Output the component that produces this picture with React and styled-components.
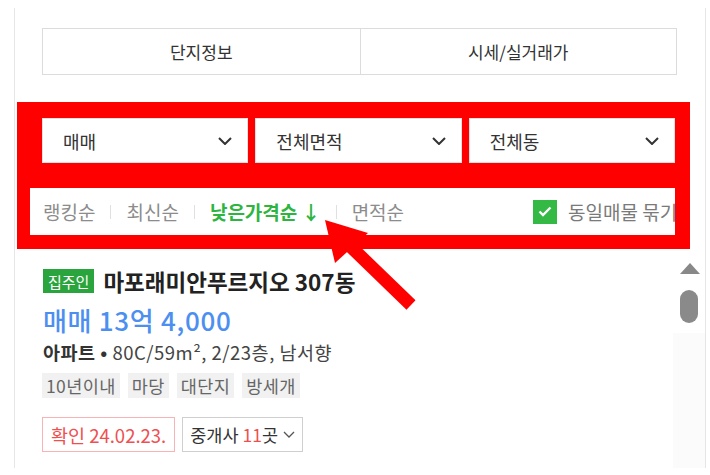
import React from "react";
import styled, { createGlobalStyle } from "styled-components";

const Global = createGlobalStyle`
  html, body { margin: 0; padding: 0; background: #fff; }
  body { font-family: "Noto Sans CJK KR", "Noto Sans", sans-serif; }
  * { box-sizing: border-box; }
`;

const Page = styled.div`
  position: relative;
  width: 710px;
  height: 475px;
  overflow: hidden;
  background: #fff;
  padding-top: 8px;
  padding-left: 14px;
`;

const Panel = styled.div`
  width: 692px;
  height: 460px;
  border-left: 1px solid #e6e6e6;
  border-right: 1px solid #e6e6e6;
  display: flex;
  flex-direction: column;
`;

const Tabs = styled.div`
  margin: 20px 28px 0 27px;
  height: 47px;
  border: 1px solid #dcdcdc;
  display: grid;
  grid-template-columns: 1fr 1fr;
`;

const Tab = styled.div`
  display: flex;
  align-items: center;
  justify-content: center;
  font-size: 17px;
  color: #333;
  & + & { border-left: 1px solid #dcdcdc; }
`;

const Frame = styled.div`
  margin: 27px 15px 0 2px;
  background: #ff0000;
  padding: 16px 15px 14px 13px;
  display: flex;
  flex-direction: column;
  gap: 25px;
`;

const SelectRow = styled.div`
  margin-left: 12px;
  display: grid;
  grid-template-columns: 1fr 1fr 1fr;
  gap: 7px;
`;

const Select = styled.div`
  height: 45px;
  background: #fff;
  border: 1px solid #e2e2e2;
  display: flex;
  align-items: center;
  justify-content: space-between;
  padding: 0 15px 0 20px;
  font-size: 18px;
  color: #333;
`;

const SortRow = styled.div`
  height: 47px;
  background: #fff;
  display: flex;
  align-items: center;
  padding-left: 13px;
  overflow: hidden;
`;

const SortList = styled.div`
  flex: 1;
  display: flex;
  align-items: center;
  gap: 15px;
`;

const SortItem = styled.span`
  font-size: 19px;
  white-space: nowrap;
  color: ${(p) => (p.$active ? "#2db53f" : "#8c8c8c")};
  font-weight: ${(p) => (p.$active ? 700 : 400)};
`;

const Sep = styled.span`
  width: 1px;
  height: 14px;
  background: #e0e0e0;
`;

const CheckGroup = styled.div`
  width: 142px;
  flex: none;
  display: flex;
  align-items: center;
  gap: 11px;
  overflow: hidden;
  white-space: nowrap;
`;

const CheckBox = styled.span`
  width: 24px;
  height: 24px;
  flex: none;
  background: #34b944;
  display: flex;
  align-items: center;
  justify-content: center;
`;

const CheckLabel = styled.span`
  font-size: 19px;
  color: #7a7a7a;
`;

const ListArea = styled.div`
  flex: 1;
  display: flex;
`;

const Item = styled.div`
  flex: 1;
  padding: 20px 0 0 27px;
  display: flex;
  flex-direction: column;
  align-items: flex-start;
`;

const TitleRow = styled.div`
  display: flex;
  align-items: center;
  gap: 9px;
  height: 24px;
`;

const Badge = styled.span`
  height: 24px;
  padding: 0 5px;
  background: #2aa43c;
  color: #fff;
  font-size: 15px;
  display: flex;
  align-items: center;
  margin-left: 1px;
`;

const Title = styled.span`
  font-size: 22.5px;
  font-weight: 700;
  color: #222;
  line-height: 24px;
`;

const Price = styled.div`
  margin-top: 12px;
  margin-left: 1px;
  font-size: 26px;
  letter-spacing: 0.7px;
  line-height: 30px;
  color: #4d8ff0;
  font-weight: 500;
`;

const Detail = styled.div`
  margin-top: 6px;
  margin-left: 1px;
  font-size: 18.5px;
  letter-spacing: 0.5px;
  line-height: 22px;
  color: #444;
  white-space: nowrap;
`;

const Strong = styled.b`
  font-weight: 700;
  color: #333;
`;

const Tags = styled.div`
  margin-top: 10px;
  display: flex;
  gap: 8px;
`;

const Tag = styled.span`
  height: 25px;
  padding: 0 4px;
  background: #f1f1f1;
  color: #666;
  font-size: 17.5px;
  letter-spacing: 0.4px;
  display: flex;
  align-items: center;
`;

const Bottom = styled.div`
  margin-top: 19px;
  display: flex;
  gap: 7px;
`;

const Box = styled.span`
  height: 35px;
  padding: 0 ${(p) => (p.$tone === "red" ? "8px" : "7px")};
  display: flex;
  align-items: center;
  gap: 5px;
  font-size: ${(p) => (p.$tone === "red" ? "18.5px" : "17.5px")};
  white-space: nowrap;
  border: 1px solid ${(p) => (p.$tone === "red" ? "#f8b4b4" : "#cfcfcf")};
  color: ${(p) => (p.$tone === "red" ? "#f04f4f" : "#333")};
`;

const Red = styled.span`
  color: #f04f4f;
`;

const ScrollCol = styled.div`
  width: 32px;
  flex: none;
  display: flex;
  flex-direction: column;
  align-items: center;
  padding-top: 14px;
`;

const ScrollUp = styled.div`
  width: 0;
  height: 0;
  border-left: 10px solid transparent;
  border-right: 10px solid transparent;
  border-bottom: 11px solid #888;
  margin-left: 2px;
`;

const Thumb = styled.div`
  margin-top: 16px;
  width: 18px;
  height: 33px;
  border-radius: 9px;
  background: #8a8a8a;
`;

const Track = styled.div`
  flex: 1;
  align-self: stretch;
  margin-top: 10px;
  background: #fbfbfb;
`;

const Overlay = styled.svg`
  position: absolute;
  left: 0;
  top: 0;
  pointer-events: none;
`;

const Chevron = ({ w = 14, h = 8, color = "#333", sw = 2 }) => (
  <svg width={w} height={h} viewBox={`0 0 ${w} ${h}`}>
    <polyline
      points={`1,1 ${w / 2},${h - 1} ${w - 1},1`}
      fill="none"
      stroke={color}
      strokeWidth={sw}
    />
  </svg>
);

export default function App() {
  return (
    <Page>
      <Global />
      <Panel>
        <Tabs>
          <Tab>단지정보</Tab>
          <Tab>시세/실거래가</Tab>
        </Tabs>
        <Frame>
          <SelectRow>
            <Select>
              매매 <Chevron />
            </Select>
            <Select>
              전체면적 <Chevron />
            </Select>
            <Select>
              전체동 <Chevron />
            </Select>
          </SelectRow>
          <SortRow>
            <SortList>
              <SortItem>랭킹순</SortItem>
              <Sep />
              <SortItem>최신순</SortItem>
              <Sep />
              <SortItem $active>낮은가격순 ↓</SortItem>
              <Sep />
              <SortItem>면적순</SortItem>
            </SortList>
            <CheckGroup>
              <CheckBox>
                <svg width="14" height="11" viewBox="0 0 14 11">
                  <polyline points="1.5,5.5 5,9 12.5,1.5" fill="none" stroke="#fff" strokeWidth="2.4" />
                </svg>
              </CheckBox>
              <CheckLabel>동일매물 묶기</CheckLabel>
            </CheckGroup>
          </SortRow>
        </Frame>
        <ListArea>
          <Item>
            <TitleRow>
              <Badge>집주인</Badge>
              <Title>마포래미안푸르지오 307동</Title>
            </TitleRow>
            <Price>매매 13억 4,000</Price>
            <Detail>
              <Strong>아파트 •</Strong> 80C/59m², 2/23층, 남서향
            </Detail>
            <Tags>
              <Tag>10년이내</Tag>
              <Tag>마당</Tag>
              <Tag>대단지</Tag>
              <Tag>방세개</Tag>
            </Tags>
            <Bottom>
              <Box $tone="red">확인 24.02.23.</Box>
              <Box>
                <span>
                  중개사 <Red>11</Red>곳
                </span>
                <Chevron w={12} h={7} color="#555" sw={1.3} />
              </Box>
            </Bottom>
          </Item>
          <ScrollCol>
            <ScrollUp />
            <Thumb />
            <Track />
          </ScrollCol>
        </ListArea>
      </Panel>
      <Overlay width="710" height="475" viewBox="0 0 710 475">
        <line x1="349" y1="245" x2="411" y2="305" stroke="#ff0000" strokeWidth="13" />
        <polygon points="325,220 335,263 368,233" fill="#ff0000" />
      </Overlay>
    </Page>
  );
}
